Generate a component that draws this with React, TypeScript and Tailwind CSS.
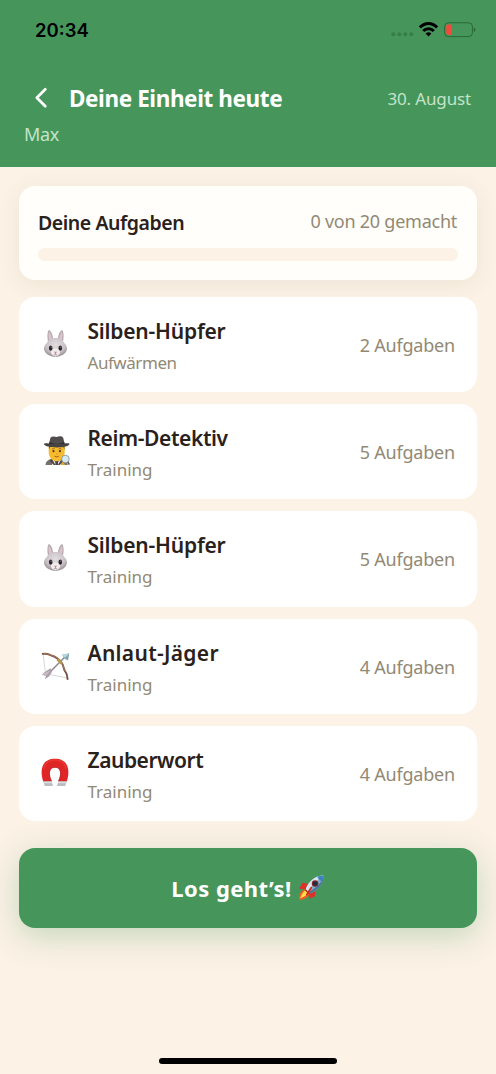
import React from "react";

const RabbitIcon = () => (
	<svg width="25" height="29" viewBox="0 0 26 30">
		<defs>
			<radialGradient id="rabbitFace" cx="50%" cy="35%" r="65%">
				<stop offset="0" stopColor="#e2dddf" />
				<stop offset="0.65" stopColor="#c9c1c6" />
				<stop offset="1" stopColor="#968c93" />
			</radialGradient>
		</defs>
		<path d="M5.4 13.5C4.2 9 4.3 3.5 6 .9C8.6 1.8 10.4 6 10.6 12Z" fill="#b3a9af" />
		<path d="M20.6 13.5C21.8 9 21.7 3.5 20 .9C17.4 1.8 15.6 6 15.4 12Z" fill="#b3a9af" />
		<path d="M6.4 11.5C5.5 8 5.6 4.8 6.3 2.8C8 4.5 9 7.5 9.2 11.2Z" fill="#dfc3cc" />
		<path d="M19.6 11.5C20.5 8 20.4 4.8 19.7 2.8C18 4.5 17 7.5 16.8 11.2Z" fill="#dfc3cc" />
		<path
			d="M13 9.3C8.7 9.3 5.2 10.8 4.2 14.3C2.2 16 .9 18.3 1.1 21C1.5 25.4 7.5 28.9 13 28.9S24.5 25.4 24.9 21C25.1 18.3 23.8 16 21.8 14.3C20.8 10.8 17.3 9.3 13 9.3Z"
			fill="url(#rabbitFace)"
		/>
		<path d="M13 20C10 20.5 7.8 22.3 8.4 24.8C9.3 27.5 11.2 28.2 13 28.2S16.7 27.5 17.6 24.8C18.2 22.3 16 20.5 13 20Z" fill="#f0ecec" />
		<ellipse cx="8" cy="19.8" rx="1.9" ry="2.7" fill="#29252a" />
		<ellipse cx="18" cy="19.8" rx="1.9" ry="2.7" fill="#29252a" />
		<circle cx="8.5" cy="18.8" r="0.6" fill="#8e8991" />
		<circle cx="18.5" cy="18.8" r="0.6" fill="#8e8991" />
		<path d="M11.2 23.6H14.8L13 25.5Z" fill="#c98391" />
		<path d="M13 25.2V26.2M11.2 26.7Q12.3 27.2 13 26.2Q13.7 27.2 14.8 26.7" stroke="#77676d" strokeWidth="0.7" fill="none" />
	</svg>
);

const DetectiveIcon = () => (
	<svg width="26" height="30" viewBox="0 0 26 30" className="ml-[3px]">
		<path d="M1.5 29C1.8 25.2 4.5 23.5 8 22.8H17C21 23.5 23.5 25.4 23.7 29Z" fill="#77706b" />
		<path d="M8.4 22L12.7 28.5L17 22L17.5 29H8Z" fill="#f2eeea" />
		<path d="M11.7 25L12.7 24.3L13.8 25L14.3 29H11.2Z" fill="#484348" />
		<path d="M7.8 22.5L5.6 25L9.8 29H11.5ZM17.6 22.5L19.8 25L15.7 29H14Z" fill="#514a47" />
		<path d="M4.7 9H20.7V16C20.7 22 17 25.2 12.7 25.2S4.7 22 4.7 16Z" fill="#f7bc2d" />
		<path d="M5 9V14L6 11H19.4L20.4 14V9Z" fill="#714926" />
		<circle cx="9.5" cy="15.2" r="1.1" fill="#533620" />
		<circle cx="15.9" cy="15.2" r="1.1" fill="#533620" />
		<path d="M8 13.1Q9.5 12.2 10.8 13M14.6 13Q16 12.2 17.5 13.1" stroke="#865622" strokeWidth="0.8" fill="none" />
		<path d="M10.6 20.2Q12.7 21.7 14.8 20.2" stroke="#aa5b22" strokeWidth="1" fill="none" />
		<path d="M12.2 17.9H13.4" stroke="#cb8d24" />
		<path d="M5 7.8L6.4 1.8C8.5-.2 10.5.4 12.7 1.1C15-.1 17.5-.2 19.2 1.8L20.6 7.8Z" fill="#504d4c" />
		<path d="M5.3 6.2Q12.7 8.7 20.3 6.2L21 9.3H4.7Z" fill="#242325" />
		<path d="M-.1 7.8C2.7 6.7 4.2 8 12.8 8S22.7 6.7 25.5 7.8C25.5 10.2 19.5 11.4 12.7 11.4S0 10.2-.1 7.8Z" fill="#464344" />
		<circle cx="21.4" cy="23" r="3.8" fill="#d7e9ef" stroke="#8798a1" strokeWidth="0.9" />
		<path d="M23.8 26L25.4 28.7" stroke="#57585d" strokeWidth="1.6" />
		<path d="M17.5 26.7Q19.7 25.3 21.2 28.9H17.7Z" fill="#e9a626" />
	</svg>
);

const BowIcon = () => (
	<svg width="29" height="29" viewBox="0 0 30 30">
		<path d="M2.3 3.5L4.6 23.5L26.8 27.8" stroke="#c9cbcc" strokeWidth="0.8" fill="none" />
		<path
			d="M1.8 3C7.5 2.1 8.5 4.2 12.2 5.2C16 6.2 18.2 8.5 20.8 11.5C24 15 22.8 18.5 25.3 21.5C27.2 24 27.3 26 27.5 29"
			stroke="#765044"
			strokeWidth="2"
			strokeLinecap="round"
			fill="none"
		/>
		<path d="M3 2.8C7.5 2.5 8.5 4 12.2 4.9C16 6 18.5 8.5 20.8 11.3C24 15 23 18.5 25.5 21.5" stroke="#ba8265" strokeWidth="0.8" fill="none" />
		<path d="M7 24L25 6" stroke="#8c8489" strokeWidth="1.5" />
		<path d="M17 8.5L21.5 13" stroke="#b69a52" strokeWidth="2.7" />
		<path d="M21.8 3.8L29.3 2.2L28 9.8L24.5 7.9Z" fill="#7fa6b2" />
		<path d="M21.8 3.8L29.3 2.2L24.8 7Z" fill="#bcd8de" />
		<path d="M10 17.8L11.2 21.6L8.5 26L4.2 29.3L5 25.8L.8 24.3L5.4 20.8Z" fill="#aaa0aa" />
		<path d="M10 19.8L.8 24.3L5 25.8Z" fill="#c7bec5" />
	</svg>
);

const MagnetIcon = () => (
	<svg width="28" height="29" viewBox="0 0 28 29">
		<path d="M2.2 23.4C-1.5 12 .8.8 14 .8S29.5 12 25.8 23.4H17.3C21 16.5 20.2 9.3 14 9.3S7 16.5 10.7 23.4Z" fill="#df2526" />
		<path d="M2.2 23.2H10.6L12 28.1H3.8ZM17.4 23.2H25.8L24.2 28.1H16Z" fill="#b9bcc1" />
		<path d="M2.8 23.9H10.6L11 25.2H3.2ZM17.4 23.9H25.2L24.8 25.2H17Z" fill="#dadce0" />
		<path d="M3 11C4 4.7 8 1.8 14 1.8S24 4.7 25 11" stroke="#ec3a33" strokeWidth="1.3" fill="none" />
		<path d="M10.5 23C7 16.5 7.8 9.3 14 9.3S21 16.5 17.5 23" stroke="#a9191c" strokeWidth="0.8" fill="none" />
	</svg>
);

const RocketIcon = () => (
	<svg width="27" height="27" viewBox="0 0 28 28">
		<path d="M7.5 15.5C3 17 .5 21.5 1.2 27C6 26.5 10.5 24.5 12.5 20.5Z" fill="#f25c22" />
		<path d="M8 16C5.8 18 3.7 21 2 25.5C7 23.5 9.8 21.6 12 19Z" fill="#ffdf47" />
		<path d="M10.3 10L4.8 9.2L1 15L8 16.3ZM18 17.5L17.6 23L12 25.7L11.7 19.8Z" fill="#dc3028" />
		<path d="M8 15.7C11 7.3 17.5 1.7 26.7 1.2C26.8 10.3 21 16.8 12.4 20.2Z" fill="#86acc8" />
		<path d="M8 15.7C11 7.3 17.5 1.7 26.7 1.2C20.5 5.5 15.5 10.7 10.2 18Z" fill="#d9e5ea" />
		<path d="M20.2 2.7L26.7 1.2L25.8 7.7C23.7 7.7 20.2 5.2 20.2 2.7Z" fill="#3d83bd" />
		<path d="M26.3 5C25 12.3 20 17 12.4 20.2L11 18.7C18 15.5 22.5 10.5 26.3 5Z" fill="#477799" />
		<circle cx="17.7" cy="9.8" r="3.4" fill="#8c2626" />
		<circle cx="17.7" cy="9.8" r="2.4" fill="#252c3e" />
		<path d="M8 15.7L12.4 20.2L11.3 21.3L7 16.9Z" fill="#b32827" />
		<path d="M13.7 14.2L9.2 21.5" stroke="#d62b27" strokeWidth="1.9" strokeLinecap="round" />
	</svg>
);

const StatusBar = () => (
	<div className="flex h-[60px] items-center justify-between pl-[35px] pr-[20px]">
		<span className="font-['Inter'] text-[18.5px] font-semibold leading-6 text-black">20:34</span>
		<svg width="85" height="20" viewBox="0 0 85 20">
			<g fill="#367d48">
				<circle cx="2.3" cy="14.2" r="2" />
				<circle cx="8.3" cy="14.2" r="2" />
				<circle cx="14.3" cy="14.2" r="2" />
				<circle cx="20.3" cy="14.2" r="2" />
			</g>
			<g fill="none" stroke="#000" strokeWidth="3">
				<path d="M28.9 7.4C34 2.1 41 2.1 46.1 7.4" />
				<path d="M32.2 11C35 8.1 40 8.1 42.8 11" />
			</g>
			<path d="M34.6 13.4Q37.5 11 40.4 13.4L37.5 16.5Z" />
			<rect x="53.6" y="2.8" width="27.8" height="13.8" rx="3.7" fill="none" stroke="#286838" />
			<rect x="55.2" y="4.5" width="5.8" height="10.4" rx="1.8" fill="#f44a3d" />
			<path d="M82.8 7.5Q84.6 8.2 84.6 9.7T82.8 11.9Z" fill="#286838" />
		</svg>
	</div>
);

const tasks = [
	{ name: "Silben-Hüpfer", phase: "Aufwärmen", count: 2, icon: <RabbitIcon />, nameClass: "tracking-[-0.2px]", phaseClass: "tracking-[-0.45px]" },
	{ name: "Reim-Detektiv", phase: "Training", count: 5, icon: <DetectiveIcon />, nameClass: "tracking-[-0.4px]", phaseClass: "" },
	{ name: "Silben-Hüpfer", phase: "Training", count: 5, icon: <RabbitIcon />, nameClass: "tracking-[-0.2px]", phaseClass: "" },
	{ name: "Anlaut-Jäger", phase: "Training", count: 4, icon: <BowIcon />, nameClass: "tracking-[0.3px]", phaseClass: "" },
	{ name: "Zauberwort", phase: "Training", count: 4, icon: <MagnetIcon />, nameClass: "tracking-[-0.45px]", phaseClass: "" },
];

const App = () => {
	return (
		<div className="flex h-[1074px] w-[496px] flex-col overflow-hidden bg-[#fcf2e6] font-['Noto_Sans',sans-serif]">
			<header className="h-[167px] shrink-0 bg-[#46965b]">
				<StatusBar />
				<div className="flex items-center pl-[34px] pr-[25px] pt-[21px]">
					<svg width="14" height="22" viewBox="0 0 14 22" fill="none" stroke="#fff" strokeWidth="2.7" className="mb-[2px]">
						<path d="M11.3 2.2L2.8 10.7L11.3 19.2" strokeLinecap="round" strokeLinejoin="round" />
					</svg>
					<h1 className="ml-[21px] text-[22.5px] font-bold leading-9 tracking-[-0.4px] text-white">Deine Einheit heute</h1>
					<span className="ml-auto text-[17px] leading-9 tracking-[-0.15px] text-[#c3e4c9]">30. August</span>
				</div>
				<p className="pl-6 text-[18px] leading-[34px] tracking-[-0.3px] text-[#c3e4c9]">Max</p>
			</header>

			<main className="px-[19px] pt-[19px]">
				<section className="h-[94px] rounded-[16px] bg-[#fffefb] px-[19px] pt-[20px] shadow-[0_4px_24px_rgba(70,75,30,0.08)]">
					<div className="flex h-[32px] items-center justify-between pr-px">
						<h2 className="pt-px text-[19.5px] font-semibold tracking-[-0.45px] text-[#2a211b]">Deine Aufgaben</h2>
						<span className="pb-px text-[18px] tracking-[-0.25px] text-[#928974]">0 von 20 gemacht</span>
					</div>
					<div className="mt-[10px] h-[13px] rounded-full bg-[#fcf2e6]" />
				</section>

				<ul className="mt-[16.5px] flex flex-col gap-3">
					{tasks.map((task, index) => (
						<li key={index} className="flex h-[95.4px] items-center rounded-[16px] bg-white pl-[18px] pr-[22px]">
							<div className="flex w-[36px] justify-center pb-[2px]">{task.icon}</div>
							<div className="ml-[14.5px] pt-[2px]">
								<h3 className={`text-[21px] font-semibold leading-[34px] text-[#2a211b] ${task.nameClass}`}>{task.name}</h3>
								<p className={`text-[17px] leading-[29px] text-[#928974] ${task.phaseClass}`}>{task.phase}</p>
							</div>
							<span className="ml-auto pt-[2px] text-[18px] tracking-[-0.2px] text-[#928974]">{task.count} Aufgaben</span>
						</li>
					))}
				</ul>

				<button className="mt-[26.5px] flex h-[80px] w-full items-center justify-center gap-[6px] rounded-[16px] bg-[#46965b] text-[22px] font-bold tracking-[0.45px] text-white shadow-[0_8px_32px_rgba(70,150,91,0.3)]">
					<span className="pt-[2px]">Los geht’s!</span>
					<RocketIcon />
				</button>
			</main>

			<div className="mx-auto mb-[10px] mt-auto h-[6px] w-[178px] rounded-full bg-black" />
		</div>
	);
};

export default App;
